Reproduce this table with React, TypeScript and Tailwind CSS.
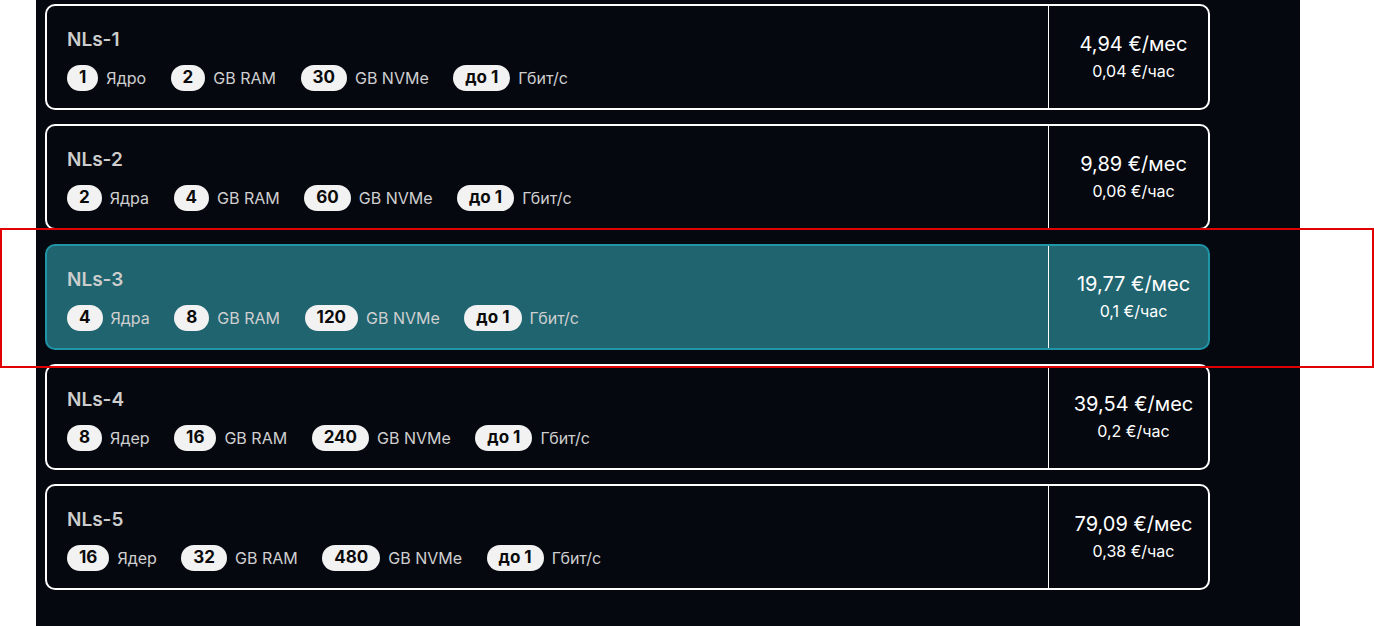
import React from "react";

type Plan = {
  name: string;
  cores: string;
  coresLabel: string;
  ram: string;
  disk: string;
  month: string;
  hour: string;
  active?: boolean;
};

const plans: Plan[] = [
  { name: "NLs-1", cores: "1", coresLabel: "Ядро", ram: "2", disk: "30", month: "4,94 €/мес", hour: "0,04 €/час" },
  { name: "NLs-2", cores: "2", coresLabel: "Ядра", ram: "4", disk: "60", month: "9,89 €/мес", hour: "0,06 €/час" },
  { name: "NLs-3", cores: "4", coresLabel: "Ядра", ram: "8", disk: "120", month: "19,77 €/мес", hour: "0,1 €/час", active: true },
  { name: "NLs-4", cores: "8", coresLabel: "Ядер", ram: "16", disk: "240", month: "39,54 €/мес", hour: "0,2 €/час" },
  { name: "NLs-5", cores: "16", coresLabel: "Ядер", ram: "32", disk: "480", month: "79,09 €/мес", hour: "0,38 €/час" },
];

function Spec({ value, label }: { value: string; label: string }) {
  return (
    <div className="flex items-center gap-[8px]">
      <span className="flex h-[26px] items-center rounded-full bg-[#f2f2f2] px-[12px] text-[17px] font-bold text-[#0a0a0a]">
        {value}
      </span>
      <span className="text-[16px] text-[#cfcfcf]">{label}</span>
    </div>
  );
}

export default function App() {
  return (
    <div className="relative h-[626px] w-[1374px] overflow-hidden bg-white" style={{ fontFamily: "Inter, 'Noto Sans', sans-serif" }}>
      <div className="ml-[36px] h-[626px] w-[1264px] bg-[#05080f] pl-[9px] pt-[4px]">
        <div className="flex w-[1165px] flex-col gap-[14px]">
          {plans.map((p) => (
            <div
              key={p.name}
              className={
                p.active
                  ? "flex h-[106px] rounded-[10px] border-2 border-[#1e96a8] bg-[#20646f]"
                  : "flex h-[106px] rounded-[10px] border-2 border-white bg-[#05080f]"
              }
            >
              <div className="flex flex-1 flex-col justify-center gap-[13px] pl-[20px] pt-[4px]">
                <div className="text-[19px] font-semibold leading-[24px] text-[#cdcdcd]">{p.name}</div>
                <div className="flex items-center gap-[24.5px]">
                  <Spec value={p.cores} label={p.coresLabel} />
                  <Spec value={p.ram} label="GB RAM" />
                  <Spec value={p.disk} label="GB NVMe" />
                  <Spec value="до 1" label="Гбит/с" />
                </div>
              </div>
              <div className="flex w-[160px] flex-col items-center justify-center gap-[2px] border-l border-white pl-[10px] text-white">
                <div className="text-[20px] leading-[26px]">{p.month}</div>
                <div className="text-[16px] leading-[24px]">{p.hour}</div>
              </div>
            </div>
          ))}
        </div>
      </div>
      <div className="absolute left-0 top-[228px] h-[140px] w-[1374px] border-2 border-[#e00000]" />
    </div>
  );
}
